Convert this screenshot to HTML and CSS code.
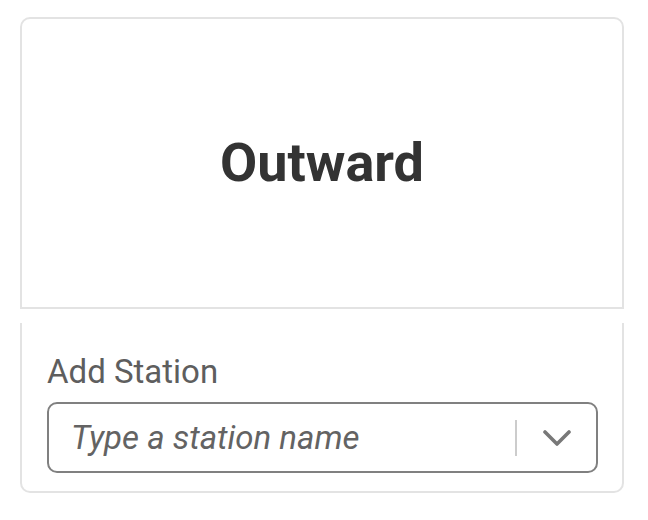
FILE: index.html
```html
<!DOCTYPE html>
<html lang="en">
<head>
<meta charset="utf-8">
<title>Outward</title>
<link rel="stylesheet" href="styles.css">
</head>
<body>
  <div class="card">
    <div class="card-top">
      <h1 class="title">Outward</h1>
    </div>
    <div class="card-gap"></div>
    <div class="card-bottom">
      <label class="field-label" for="station">Add Station</label>
      <div class="select">
        <input id="station" class="select-input" type="text" placeholder="Type a station name">
        <span class="select-divider"></span>
        <span class="select-toggle">
          <svg class="chevron" width="28" height="16" viewBox="0 0 28 16" aria-hidden="true">
            <path d="M2 2 L14 14 L26 2" fill="none" stroke="#787878" stroke-width="3.6" stroke-linecap="round" stroke-linejoin="round"/>
          </svg>
        </span>
      </div>
    </div>
  </div>
</body>
</html>
```

FILE: styles.css
```css
* {
  box-sizing: border-box;
}

html, body {
  margin: 0;
  padding: 0;
  background: #ffffff;
}

body {
  padding: 17px 0 0 20px;
  font-family: Roboto, "Liberation Sans", Arial, sans-serif;
}

.card {
  width: 604px;
}

.card-top {
  height: 292px;
  border: 2px solid #e3e3e3;
  border-radius: 10px 10px 0 0;
  display: flex;
  align-items: center;
  justify-content: center;
}

.title {
  margin: 0;
  font-size: 54px;
  font-weight: 700;
  color: #333333;
  line-height: 1.2;
}

.card-gap {
  height: 14px;
}

.card-bottom {
  height: 170px;
  border: 2px solid #e3e3e3;
  border-top: none;
  border-radius: 0 0 10px 10px;
  padding: 30px 24px 0 25px;
  display: flex;
  flex-direction: column;
}

.field-label {
  display: block;
  font-size: 33px;
  line-height: 38px;
  color: #5e5e5e;
  margin-bottom: 11px;
}

.select {
  height: 71px;
  border: 2px solid #808080;
  border-radius: 10px;
  display: flex;
  align-items: center;
  padding-left: 22px;
}

.select-input {
  flex: 1;
  min-width: 0;
  border: none;
  outline: none;
  background: transparent;
  font-family: Roboto, "Liberation Sans", Arial, sans-serif;
  font-size: 33px;
  color: #333;
  padding: 0;
}

.select-input::placeholder {
  color: #636363;
  font-style: italic;
  opacity: 1;
}

.select-divider {
  width: 2px;
  height: 36px;
  background: #cccccc;
}

.select-toggle {
  width: 79px;
  display: flex;
  align-items: center;
  justify-content: center;
}

.chevron {
  display: block;
}
```
